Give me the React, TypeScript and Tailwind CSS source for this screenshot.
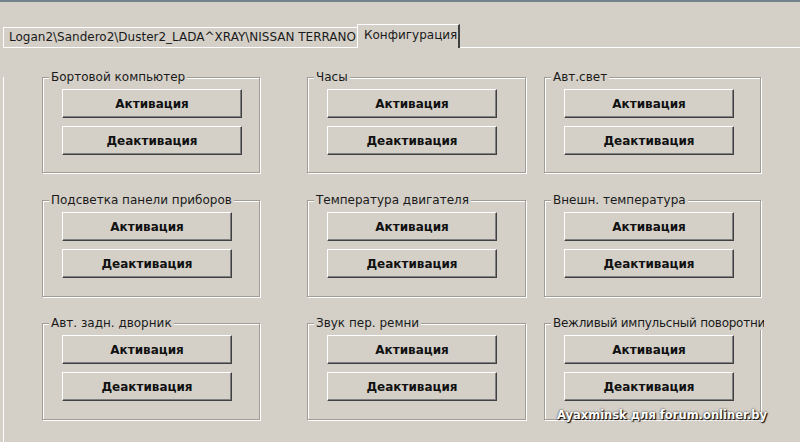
import React from "react";

type Group = {
  label: string;
  btnWidth: string;
  gap: string;
  width: string;
  labelClip?: boolean;
};

const rows: { height: string; top: string; groups: Group[] }[] = [
  {
    height: "h-[96px]",
    top: "mt-[29px]",
    groups: [
      { label: "Бортовой компьютер", btnWidth: "w-[180px]", gap: "mr-[47px]", width: "w-[218px]" },
      { label: "Часы", btnWidth: "w-[170px]", gap: "mr-[18px]", width: "w-[219px]" },
      { label: "Авт.свет", btnWidth: "w-[170px]", gap: "", width: "w-[217px]" },
    ],
  },
  {
    height: "h-[97px]",
    top: "mt-[27px]",
    groups: [
      { label: "Подсветка панели приборов", btnWidth: "w-[170px]", gap: "mr-[47px]", width: "w-[218px]" },
      { label: "Температура двигателя", btnWidth: "w-[170px]", gap: "mr-[18px]", width: "w-[219px]" },
      { label: "Внешн. температура", btnWidth: "w-[170px]", gap: "", width: "w-[217px]" },
    ],
  },
  {
    height: "h-[97px]",
    top: "mt-[26px]",
    groups: [
      { label: "Авт. задн. дворник", btnWidth: "w-[170px]", gap: "mr-[47px]", width: "w-[218px]" },
      { label: "Звук пер. ремни", btnWidth: "w-[170px]", gap: "mr-[18px]", width: "w-[219px]" },
      { label: "Вежливый импульсный поворотник", btnWidth: "w-[170px]", gap: "", width: "w-[217px]", labelClip: true },
    ],
  },
];

const Button = ({ text, width }: { text: string; width: string }) => (
  <button
    type="button"
    className={`${width} h-[29px] bg-[#d4d0c8] border border-t-white border-l-white border-r-[#404040] border-b-[#404040] shadow-[inset_-1px_-1px_0_#808080] text-[12px] font-bold text-[#111] leading-none`}
  >
    {text}
  </button>
);

const GroupBox = ({ group, height }: { group: Group; height: string }) => (
  <div
    className={`relative ${group.width} ${height} ${group.gap} border border-[#a09c96] shadow-[inset_1px_1px_0_#fff,1px_1px_0_#fff]`}
  >
    <span
      className={`absolute left-[6px] top-[-8px] bg-[#d4d0c8] px-[2px] text-[12px] leading-[14px] text-[#1a1a1a] whitespace-nowrap ${
        group.labelClip ? "max-w-[213px] overflow-hidden tracking-[-0.25px]" : ""
      }`}
    >
      {group.label}
    </span>
    <div className="flex flex-col gap-[8px] pl-[19px] pt-[11px]">
      <Button text="Активация" width={group.btnWidth} />
      <Button text="Деактивация" width={group.btnWidth} />
    </div>
  </div>
);

export default function App() {
  return (
    <div
      className="relative w-[800px] h-[442px] overflow-hidden bg-[#d4d0c8] text-[#1a1a1a]"
      style={{ fontFamily: '"DejaVu Sans", "Noto Sans", sans-serif' }}
    >
      <div className="h-[2px] bg-[#74818f]" />

      {/* tabs */}
      <div className="flex items-end mt-[22px] pl-[3px]">
        <div className="h-[21px] w-[354px] border-t border-l border-b border-t-white border-l-white border-b-white pl-[5px] text-[12px] leading-[19px] whitespace-nowrap">
          Logan2\Sandero2\Duster2_LADA^XRAY\NISSAN TERRANO
        </div>
        <div className="relative h-[24px] w-[103px] border-t border-l border-r-2 border-t-white border-l-white border-r-[#404040] pl-[6px] text-[12px] leading-[20px] whitespace-nowrap">
          Конфигурация
        </div>
        <div className="flex-1 h-[1px] bg-white" />
      </div>

      {/* panel */}
      <div className="h-[400px] ml-[3px] border-l border-l-white">
        {rows.map((row, ri) => (
          <div key={ri} className={`flex pl-[38px] ${row.top}`}>
            {row.groups.map((g, gi) => (
              <GroupBox key={gi} group={g} height={row.height} />
            ))}
          </div>
        ))}
      </div>

      <div className="absolute left-[557px] top-[407px] text-[11.5px] font-bold text-white [text-shadow:1px_1px_1px_#000,0_0_2px_#222]">
        Ayaxminsk для forum.onliner.by
      </div>
    </div>
  );
}
